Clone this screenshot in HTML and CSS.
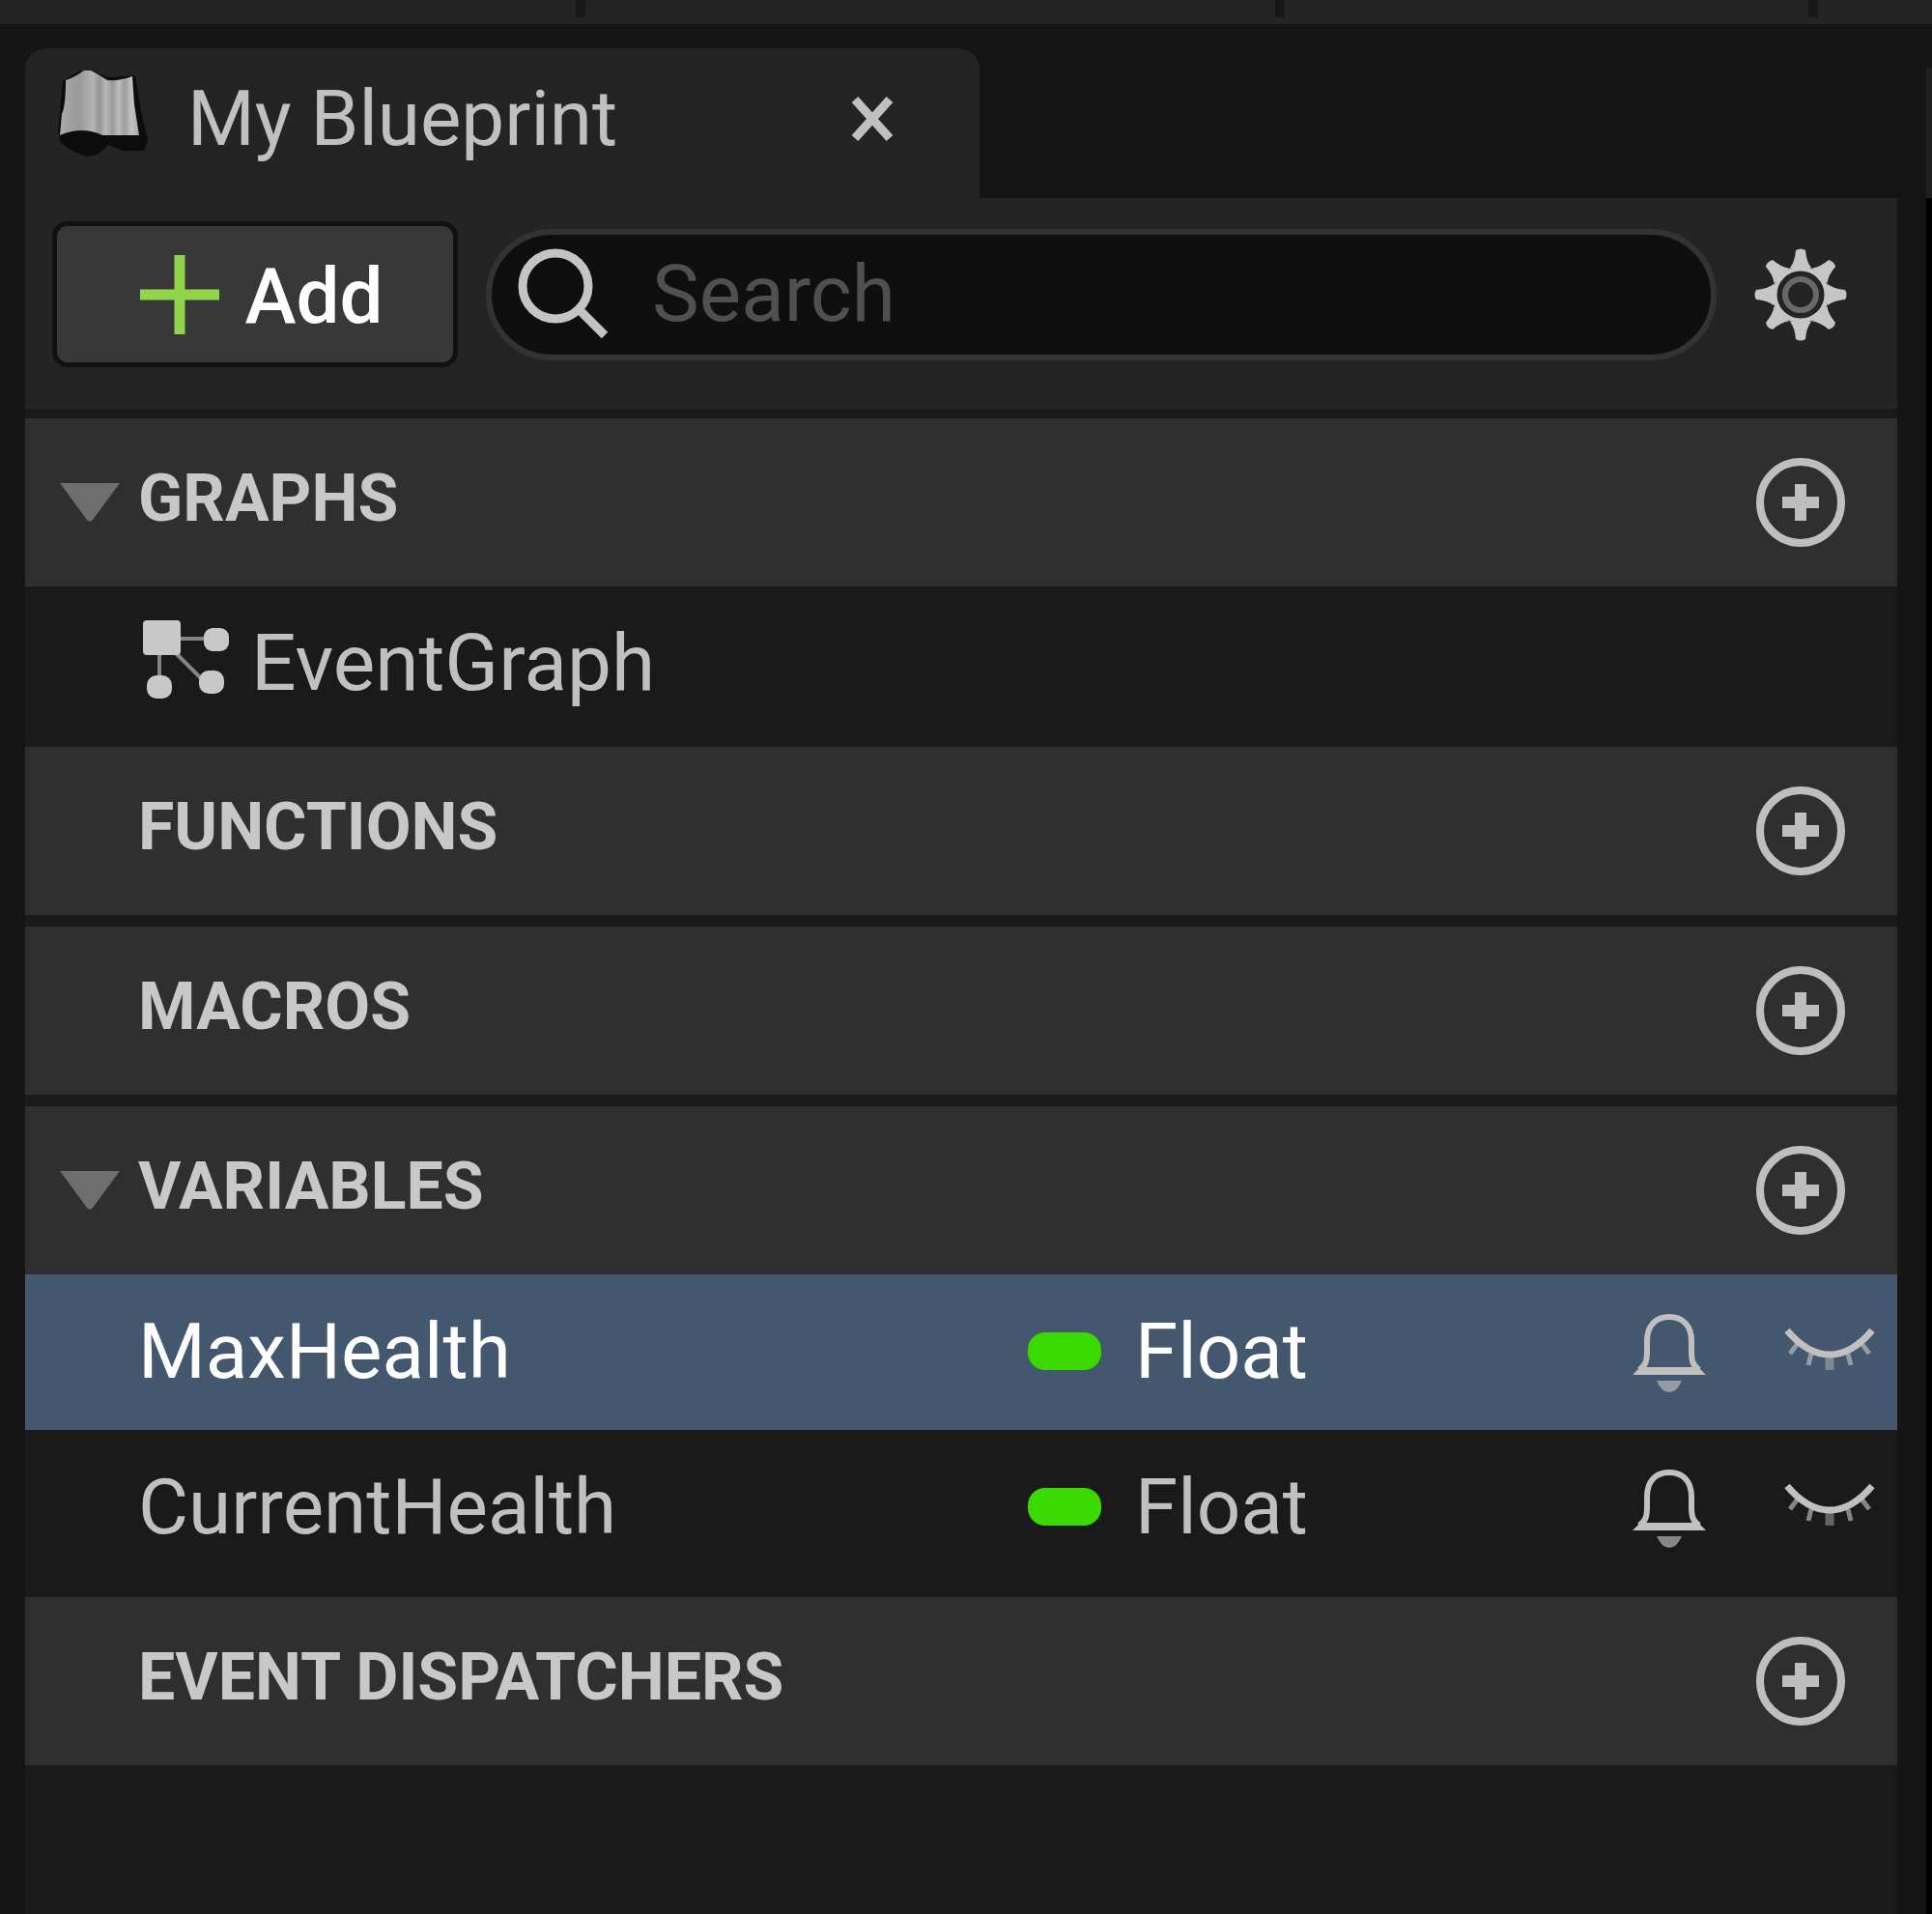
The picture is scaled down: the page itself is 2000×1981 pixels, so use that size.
FILE: index.html
```html
<!DOCTYPE html>
<html lang="en">
<head>
<meta charset="utf-8">
<title>My Blueprint</title>
<link rel="stylesheet" href="styles.css">
</head>
<body>
<svg class="defs" aria-hidden="true">
  <symbol id="plus-circle" viewBox="0 0 96 96">
    <circle cx="48" cy="48" r="42" fill="none" stroke="currentColor" stroke-width="8"/>
    <path d="M29 48H67M48 29V67" stroke="currentColor" stroke-width="12"/>
  </symbol>
  <symbol id="bell" viewBox="0 0 80 84">
    <path d="M9 60C16 55 17 50 17 40V30C17 14 26 5 40 5S63 14 63 30V40C63 50 64 55 71 60" fill="none" stroke="currentColor" stroke-width="6"/>
    <path d="M2 65L10 57H70L78 65Z" fill="currentColor"/>
    <path d="M27 71H53Q48 83 40 83T27 71Z" fill="currentColor" opacity=".65"/>
  </symbol>
  <symbol id="eye-closed" viewBox="0 0 98 52">
    <path d="M5 4Q26 29 49 29T93 4" fill="none" stroke="currentColor" stroke-width="7"/>
    <path d="M17 16L8 28M30 28L27 40M68 28L71 40M81 16L90 28" stroke="currentColor" stroke-width="5" opacity=".65"/>
    <path d="M49 30V45" stroke="currentColor" stroke-width="9" opacity=".45"/>
  </symbol>
  <symbol id="triangle" viewBox="0 0 62 40">
    <path d="M0 0H62L34 38Q31 41 28 38Z" fill="currentColor"/>
  </symbol>
</svg>

<div class="topbar"><span></span><span></span><span></span></div>

<div class="workspace">
  <main class="dock">
    <div class="tab">
      <svg class="tab-icon" viewBox="0 0 98 100" aria-hidden="true">
        <defs>
          <linearGradient id="paper" x1="0" x2="1">
            <stop offset="0" stop-color="#aaa"/><stop offset=".25" stop-color="#999"/>
            <stop offset=".42" stop-color="#b4b4b4"/><stop offset=".5" stop-color="#949494"/>
            <stop offset=".58" stop-color="#b8b8b8"/><stop offset=".67" stop-color="#989898"/>
            <stop offset=".74" stop-color="#bcbcbc"/><stop offset=".82" stop-color="#9e9e9e"/>
            <stop offset=".9" stop-color="#c2c2c2"/><stop offset="1" stop-color="#a8a8a8"/>
          </linearGradient>
        </defs>
        <g transform="translate(0 -3)">
          <path d="M5 14L28 0L52 10L80 8L87 50L93 74L90 86H68L52 80Q42 92 30 92Q16 88 3 78L0 66Z" fill="#0c0c0c"/>
          <path d="M8 13Q20 9 29 1Q40 5 51 13Q64 14 77 9L79 38L84 70H46Q25 60 2 70L4 48Q8 40 8 13Z" fill="url(#paper)"/>
        </g>
      </svg>
      <h1 class="tab-title">My Blueprint</h1>
      <button class="icon-button tab-close" aria-label="Close">
        <svg viewBox="0 0 48 48"><path d="M6 4L42 44M42 4L6 44" stroke="currentColor" stroke-width="9"/></svg>
      </button>
    </div>

    <div class="panel">
      <div class="toolbar">
        <button class="add">
          <svg viewBox="0 0 82 82" aria-hidden="true"><path d="M0 41H82M41 0V82" stroke="currentColor" stroke-width="11"/></svg>
          <span>Add</span>
        </button>
        <label class="search">
          <svg viewBox="0 0 94 94" aria-hidden="true">
            <circle cx="39" cy="39" r="34" fill="none" stroke="currentColor" stroke-width="9"/>
            <path d="M62 62L90 90" stroke="currentColor" stroke-width="9"/>
          </svg>
          <input type="text" placeholder="Search" aria-label="Search">
        </label>
        <button class="icon-button gear" aria-label="Settings">
          <svg viewBox="-48 -48 96 96">
            <g fill="#c6c6c6">
              <path id="teeth" d="M-11 -28Q-6 -34 -5 -46Q0 -49 5 -46Q6 -34 11 -28ZM-11 28Q-6 34 -5 46Q0 49 5 46Q6 34 11 28ZM-28 -11Q-34 -6 -46 -5Q-49 0 -46 5Q-34 6 -28 11ZM28 -11Q34 -6 46 -5Q49 0 46 5Q34 6 28 11Z"/>
              <use href="#teeth" transform="rotate(45)"/>
            </g>
            <circle r="27" fill="#242424" stroke="#c6c6c6" stroke-width="5"/>
            <circle r="16" fill="none" stroke="#696969" stroke-width="6"/>
          </svg>
        </button>
      </div>

      <section class="section">
        <header class="section-head">
          <button class="icon-button toggle" aria-label="Collapse graphs"><svg><use href="#triangle"/></svg></button>
          <h2>GRAPHS</h2>
          <button class="icon-button plus" aria-label="Add graph"><svg><use href="#plus-circle"/></svg></button>
        </header>
        <div class="graph-row">
          <svg viewBox="0 0 92 92" aria-hidden="true">
            <path d="M38 21H70M19 36V70M34 34L66 66" fill="none" stroke="#858585" stroke-width="4"/>
            <rect x="2" y="2" width="39" height="36" rx="4" fill="#c8c8c8"/>
            <rect x="65" y="10" width="26" height="24" rx="9" fill="#c8c8c8"/>
            <rect x="6" y="59" width="26" height="24" rx="10" fill="#c8c8c8"/>
            <rect x="60" y="54" width="26" height="24" rx="10" fill="#c8c8c8"/>
          </svg>
          EventGraph
        </div>
      </section>

      <section class="section spaced">
        <header class="section-head">
          <span class="toggle"></span>
          <h2>FUNCTIONS</h2>
          <button class="icon-button plus" aria-label="Add function"><svg><use href="#plus-circle"/></svg></button>
        </header>
      </section>

      <section class="section spaced">
        <header class="section-head">
          <span class="toggle"></span>
          <h2>MACROS</h2>
          <button class="icon-button plus" aria-label="Add macro"><svg><use href="#plus-circle"/></svg></button>
        </header>
      </section>

      <section class="section spaced">
        <header class="section-head">
          <button class="icon-button toggle" aria-label="Collapse variables"><svg><use href="#triangle"/></svg></button>
          <h2>VARIABLES</h2>
          <button class="icon-button plus" aria-label="Add variable"><svg><use href="#plus-circle"/></svg></button>
        </header>
        <table class="variables">
          <tbody>
            <tr class="selected">
              <td class="name">MaxHealth</td>
              <td class="type"><div><i class="pill"></i>Float</div></td>
              <td class="notify"><button class="icon-button bell" aria-label="Notify"><svg><use href="#bell"/></svg></button></td>
              <td class="visibility"><button class="icon-button eye" aria-label="Visibility"><svg><use href="#eye-closed"/></svg></button></td>
            </tr>
            <tr>
              <td class="name">CurrentHealth</td>
              <td class="type"><div><i class="pill"></i>Float</div></td>
              <td class="notify"><button class="icon-button bell" aria-label="Notify"><svg><use href="#bell"/></svg></button></td>
              <td class="visibility"><button class="icon-button eye" aria-label="Visibility"><svg><use href="#eye-closed"/></svg></button></td>
            </tr>
          </tbody>
        </table>
      </section>

      <section class="section">
        <header class="section-head">
          <span class="toggle"></span>
          <h2>EVENT DISPATCHERS</h2>
          <button class="icon-button plus" aria-label="Add event dispatcher"><svg><use href="#plus-circle"/></svg></button>
        </header>
      </section>
    </div>
  </main>
  <aside class="next-dock"><div class="next-tab"></div></aside>
</div>
</body>
</html>
```
FILE: styles.css
```css
* {
  box-sizing: border-box;
}

body {
  margin: 0;
  min-height: 100vh;
  display: flex;
  flex-direction: column;
  background: #151515;
  color: #c0c0c0;
  font: 400 80px/96px Roboto, sans-serif;
}

svg {
  display: block;
  flex: none;
}

h1,
h2 {
  margin: 0;
  font-size: inherit;
  font-weight: 400;
}

button {
  font: inherit;
  color: inherit;
}

.defs {
  display: none;
}

.icon-button {
  display: block;
  flex: none;
  padding: 0;
  border: 0;
  background: none;
}

.icon-button svg {
  width: 100%;
  height: 100%;
}

/* Strip above the docked tabs */
.topbar {
  display: grid;
  grid-template-columns: 606fr 724fr 552fr 118fr;
  height: 25px;
  background: #242424;
}

.topbar span {
  height: 18px;
  border-right: 10px solid #181818;
}

.workspace {
  flex: 1;
  display: flex;
  gap: 30px;
  padding: 25px 0 0 26px;
}

.dock {
  flex: 1;
  min-width: 0;
  display: flex;
  flex-direction: column;
}

.tab {
  display: flex;
  align-items: center;
  width: 51%;
  height: 155px;
  padding: 0 87px 9px 34px;
  background: #242424;
  border-radius: 22px 22px 0 0;
}

.tab-icon {
  width: 98px;
  height: 100px;
  margin-right: 36px;
}

.tab-title {
  flex: 1;
  white-space: nowrap;
}

.tab-close {
  width: 48px;
  height: 48px;
}

.panel {
  flex: 1;
  background: #1a1a1a;
}

.toolbar {
  display: flex;
  align-items: center;
  padding: 24px 52px 43px 28px;
  background: #242424;
  margin-bottom: 10px;
}

.add {
  display: flex;
  flex: none;
  align-items: center;
  justify-content: center;
  gap: 26px;
  width: 420px;
  height: 151px;
  margin-right: 29px;
  padding: 0 0 0 14px;
  background: #383838;
  border: 5px solid #111;
  border-radius: 16px;
  color: #fff;
  font-weight: 500;
}

.add span {
  padding-top: 4px;
}

.add svg {
  width: 82px;
  height: 82px;
  color: #8fd44a;
}

.search {
  flex: 1;
  min-width: 0;
  display: flex;
  align-items: center;
  gap: 45px;
  height: 136px;
  margin-right: 39px;
  padding: 0 60px 2px 27px;
  background: #0f0f0f;
  border: 6px solid #333;
  border-radius: 68px;
}

.search svg {
  width: 94px;
  height: 94px;
  color: #c4c4c4;
}

.search input {
  flex: 1;
  min-width: 0;
  padding: 0;
  border: 0;
  outline: 0;
  background: none;
  color: #c0c0c0;
  font: inherit;
  font-size: 82px;
}

.search input::placeholder {
  color: #505050;
  opacity: 1;
}

.gear,
.plus {
  width: 96px;
  height: 96px;
}

/* Collapsible categories */
.spaced {
  margin-bottom: 12px;
}

.section-head {
  display: flex;
  align-items: center;
  height: 174px;
  padding: 0 52px 0 36px;
  background: #2f2f2f;
}

.section-head h2 {
  flex: 1;
  padding-bottom: 8px;
  color: #c8c8c8;
  font-size: 68px;
  font-weight: 700;
}

.toggle {
  width: 62px;
  height: 40px;
  margin-right: 19px;
  color: #6e6e6e;
}

.plus {
  color: #bebebe;
}

.graph-row {
  display: flex;
  align-items: center;
  gap: 22px;
  height: 166px;
  padding: 0 0 8px 120px;
  font-size: 82px;
}

.graph-row svg {
  width: 92px;
  height: 92px;
}

.variables {
  width: 100%;
  border-collapse: collapse;
  table-layout: fixed;
}

.variables td {
  height: 161px;
  padding: 0 0 2px;
  vertical-align: middle;
}

.variables .name {
  padding-left: 117px;
}

.variables .type {
  width: 624px;
}

.type div {
  display: flex;
  align-items: center;
  gap: 35px;
}

.variables .notify {
  width: 157px;
  padding-top: 2px;
}

.variables .visibility {
  width: 119px;
}

.pill {
  width: 76px;
  height: 39px;
  border-radius: 18px;
  background: #3ad900;
}

.bell {
  width: 80px;
  height: 84px;
}

.eye {
  width: 98px;
  height: 52px;
}

.selected {
  background: #43586f;
}

.selected .name,
.selected .type {
  color: #fff;
}

/* Edge of the neighbouring dock */
.next-dock {
  flex: none;
  width: 6px;
  overflow: hidden;
  background: #000;
}

.next-tab {
  height: 155px;
  background: #202020;
  border-top: 20px solid #151515;
}
```
